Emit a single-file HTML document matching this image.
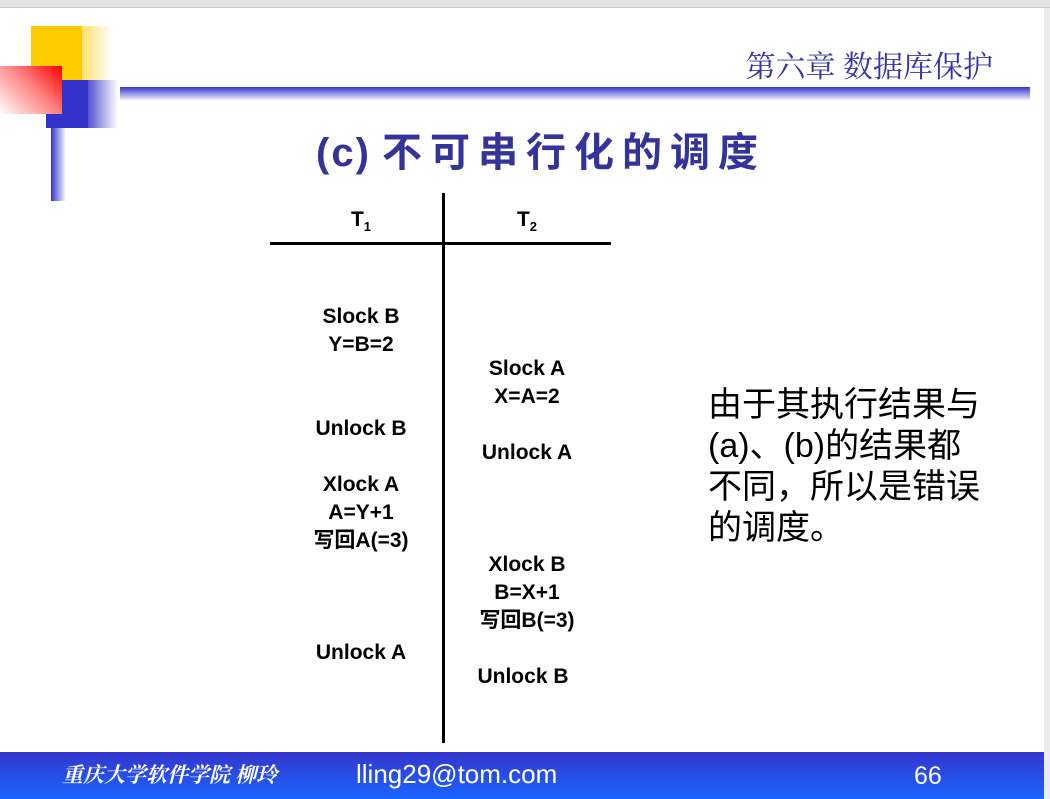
<!DOCTYPE html>
<html><head><meta charset="utf-8"><style>
body{margin:0;width:1050px;height:799px;position:relative;overflow:hidden;background:#fff;font-family:"Liberation Sans","Noto Sans CJK SC",sans-serif}
.a{position:absolute}
.t{position:absolute;font-weight:bold;font-size:21px;line-height:20px;text-align:center;width:200px;white-space:nowrap;color:#000}
</style></head><body>
<div class="a" style="left:0;top:0;width:1050px;height:7px;background:#e4e4e4;border-bottom:1px solid #c8c8c8"></div>
<div class="a" style="left:1044px;top:8px;width:6px;height:791px;background:#ececec"></div>
<!-- logo -->
<div class="a" style="left:31px;top:26px;width:51px;height:54px;background:#ffcc00"></div>
<div class="a" style="left:82px;top:26px;width:30px;height:54px;background:linear-gradient(90deg,#ffe070,#fff)"></div>
<div class="a" style="left:46px;top:80px;width:42px;height:48px;background:#3333cc"></div>
<div class="a" style="left:88px;top:80px;width:30px;height:48px;background:linear-gradient(90deg,#5555d0,#fff)"></div>
<div class="a" style="left:0;top:66px;width:62px;height:48px;background:linear-gradient(225deg,#ff0000,#ff8080 45%,#fff)"></div>
<div class="a" style="left:51px;top:128px;width:15px;height:73px;background:linear-gradient(90deg,#3333cc,#fff)"></div>
<div class="a" style="left:120px;top:87px;width:910px;height:14px;background:linear-gradient(180deg,#3333cc,#fff)"></div>
<div class="a" style="left:650px;top:48px;width:343px;text-align:right;font-family:'Liberation Serif','Noto Serif CJK SC',serif;font-size:30px;line-height:40px;color:#3333aa">第六章 数据库保护</div>
<div class="a" style="left:316px;top:128px;font-size:40px;line-height:50px;font-weight:bold;color:#333399;white-space:nowrap"><span style="letter-spacing:2px">(c)</span> <span style="letter-spacing:8px">不可串行化的调度</span></div>
<!-- table -->
<div class="a" style="left:442px;top:193px;width:3px;height:550px;background:#000"></div>
<div class="a" style="left:270px;top:242px;width:341px;height:3px;background:#000"></div>
<div class="t" style="left:261px;top:210px">T<sub style="font-size:13px">1</sub></div>
<div class="t" style="left:427px;top:210px">T<sub style="font-size:13px">2</sub></div>
<div class="t" style="left:261px;top:307px">Slock B</div>
<div class="t" style="left:261px;top:335px">Y=B=2</div>
<div class="t" style="left:261px;top:419px">Unlock B</div>
<div class="t" style="left:261px;top:475px">Xlock A</div>
<div class="t" style="left:261px;top:503px">A=Y+1</div>
<div class="t" style="left:261px;top:531px">写回A(=3)</div>
<div class="t" style="left:261px;top:643px">Unlock A</div>
<div class="t" style="left:427px;top:359px">Slock A</div>
<div class="t" style="left:427px;top:387px">X=A=2</div>
<div class="t" style="left:427px;top:443px">Unlock A</div>
<div class="t" style="left:427px;top:555px">Xlock B</div>
<div class="t" style="left:427px;top:583px">B=X+1</div>
<div class="t" style="left:427px;top:611px">写回B(=3)</div>
<div class="t" style="left:423px;top:667px">Unlock B</div>
<div class="a" style="left:708px;top:385px;font-size:34px;line-height:41px;color:#000;white-space:nowrap">由于其执行结果与<br>(a)、(b)的结果都<br>不同，所以是错误<br>的调度。</div>
<!-- footer -->
<div class="a" style="left:0;top:752px;width:1044px;height:47px;background:linear-gradient(180deg,#3535cc,#1a66ff)"></div>
<div class="a" style="left:62px;top:760px;font-family:'Liberation Serif','Noto Serif CJK SC',serif;font-style:italic;font-weight:bold;font-size:21px;line-height:30px;color:#fff">重庆大学软件学院 柳玲</div>
<div class="a" style="left:356px;top:759px;font-size:26px;line-height:30px;color:#fff">lling29@tom.com</div>
<div class="a" style="left:914px;top:761px;font-size:25px;line-height:30px;color:#fff">66</div>
</body></html>
